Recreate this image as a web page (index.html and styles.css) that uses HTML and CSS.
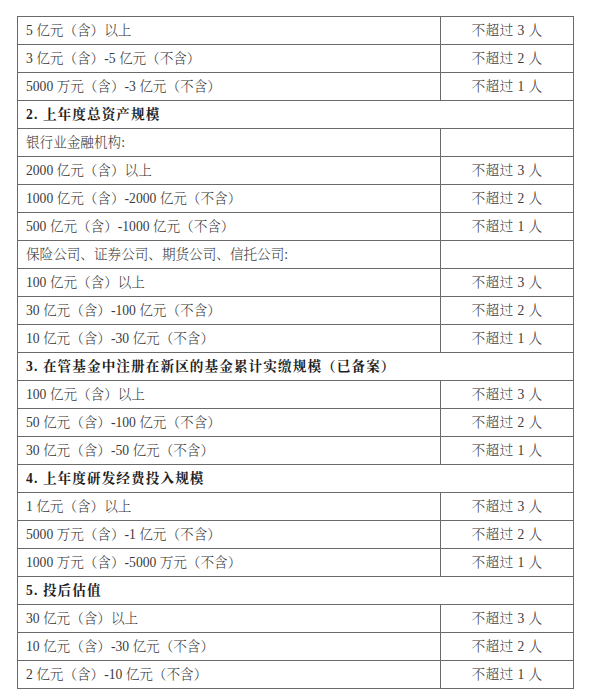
FILE: index.html
```html
<!DOCTYPE html>
<html lang="zh-CN">
<head>
<meta charset="utf-8">
<link rel="stylesheet" href="styles.css">
</head>
<body>
<table class="quota">
<colgroup><col class="c1"><col class="c2"></colgroup>
<tbody>
<tr><td>5 亿元（含）以上</td><td class="n">不超过 3 人</td></tr>
<tr><td>3 亿元（含）-5 亿元（不含）</td><td class="n">不超过 2 人</td></tr>
<tr><td>5000 万元（含）-3 亿元（不含）</td><td class="n">不超过 1 人</td></tr>
<tr class="sec"><td colspan="2">2. 上年度总资产规模</td></tr>
<tr><td>银行业金融机构:</td><td class="n"></td></tr>
<tr><td>2000 亿元（含）以上</td><td class="n">不超过 3 人</td></tr>
<tr><td>1000 亿元（含）-2000 亿元（不含）</td><td class="n">不超过 2 人</td></tr>
<tr><td>500 亿元（含）-1000 亿元（不含）</td><td class="n">不超过 1 人</td></tr>
<tr><td>保险公司、证券公司、期货公司、信托公司:</td><td class="n"></td></tr>
<tr><td>100 亿元（含）以上</td><td class="n">不超过 3 人</td></tr>
<tr><td>30 亿元（含）-100 亿元（不含）</td><td class="n">不超过 2 人</td></tr>
<tr><td>10 亿元（含）-30 亿元（不含）</td><td class="n">不超过 1 人</td></tr>
<tr class="sec"><td colspan="2">3. 在管基金中注册在新区的基金累计实缴规模（已备案）</td></tr>
<tr><td>100 亿元（含）以上</td><td class="n">不超过 3 人</td></tr>
<tr><td>50 亿元（含）-100 亿元（不含）</td><td class="n">不超过 2 人</td></tr>
<tr><td>30 亿元（含）-50 亿元（不含）</td><td class="n">不超过 1 人</td></tr>
<tr class="sec"><td colspan="2">4. 上年度研发经费投入规模</td></tr>
<tr><td>1 亿元（含）以上</td><td class="n">不超过 3 人</td></tr>
<tr><td>5000 万元（含）-1 亿元（不含）</td><td class="n">不超过 2 人</td></tr>
<tr><td>1000 万元（含）-5000 万元（不含）</td><td class="n">不超过 1 人</td></tr>
<tr class="sec"><td colspan="2">5. 投后估值</td></tr>
<tr><td>30 亿元（含）以上</td><td class="n">不超过 3 人</td></tr>
<tr><td>10 亿元（含）-30 亿元（不含）</td><td class="n">不超过 2 人</td></tr>
<tr><td>2 亿元（含）-10 亿元（不含）</td><td class="n">不超过 1 人</td></tr>
</tbody>
</table>
</body>
</html>
```
FILE: styles.css
```css
html, body {
  margin: 0;
  padding: 0;
  background: #ffffff;
}
body {
  padding: 16px 0 0 17px;
  font-family: "Liberation Serif", "Noto Serif CJK SC", "Noto Sans CJK SC", serif;
  font-size: 13.6px;
  color: #3a3a3a;
}
.quota {
  border-collapse: collapse;
  table-layout: fixed;
  width: 556px;
}
.quota .c1 { width: 423px; }
.quota .c2 { width: 133px; }
.quota td {
  border: 1px solid #6a6a6a;
  height: 28px;
  padding: 0 0 0 8px;
  box-sizing: border-box;
  vertical-align: middle;
  white-space: nowrap;
  font-weight: 300;
  line-height: 1;
}
.quota td.n {
  text-align: center;
  padding: 0;
  letter-spacing: 0.4px;
}
.quota .sec td {
  font-weight: bold;
  color: #1e1e1e;
  letter-spacing: 1.1px;
}
```
